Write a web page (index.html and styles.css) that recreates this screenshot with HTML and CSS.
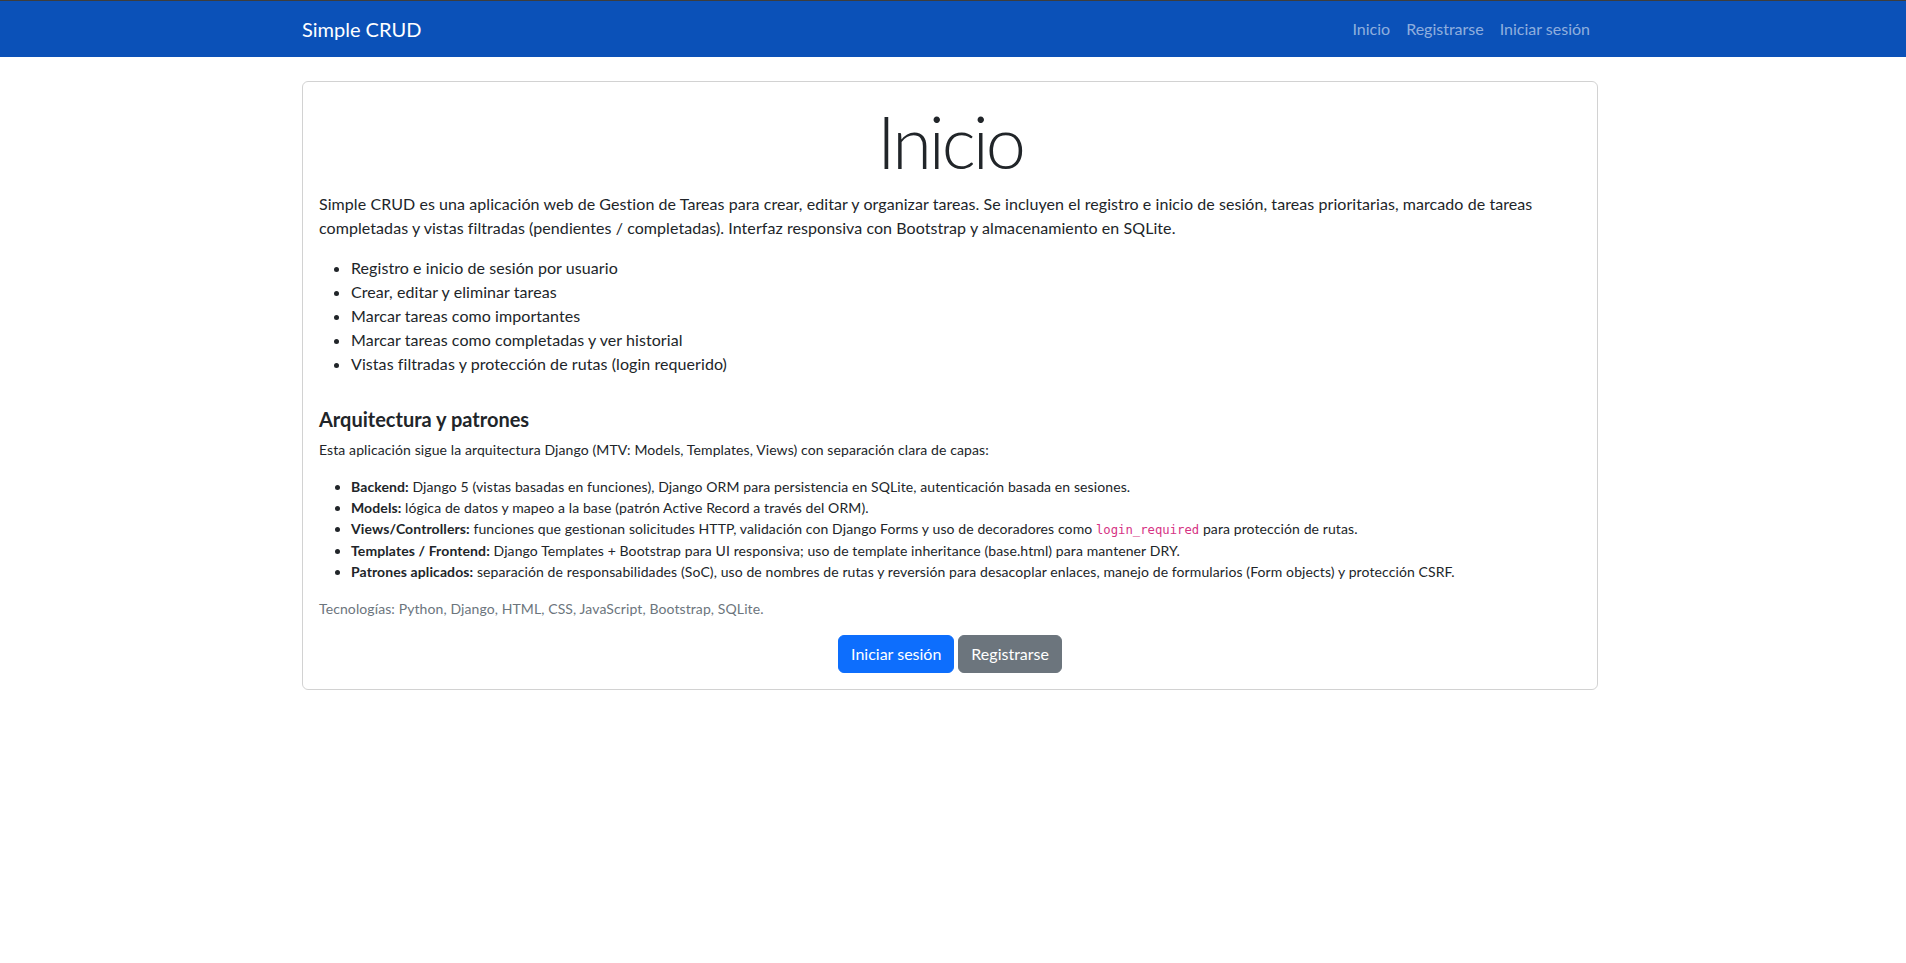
FILE: index.html
```html
<!DOCTYPE html>
<html lang="es">
<head>
<meta charset="utf-8">
<title>Simple CRUD</title>
<link rel="stylesheet" href="styles.css">
</head>
<body>
<nav class="navbar">
  <div class="container nav-inner">
    <a class="brand" href="#">Simple CRUD</a>
    <ul class="nav-links">
      <li><a href="#">Inicio</a></li>
      <li><a href="#">Registrarse</a></li>
      <li><a href="#">Iniciar sesión</a></li>
    </ul>
  </div>
</nav>
<main class="container main">
  <div class="card">
    <h1 class="display">Inicio</h1>
    <p>Simple CRUD es una aplicación web de Gestion de Tareas para crear, editar y organizar tareas. Se incluyen el registro e inicio de sesión, tareas prioritarias, marcado de tareas completadas y vistas filtradas (pendientes / completadas). Interfaz responsiva con Bootstrap y almacenamiento en SQLite.</p>
    <ul class="list">
      <li>Registro e inicio de sesión por usuario</li>
      <li>Crear, editar y eliminar tareas</li>
      <li>Marcar tareas como importantes</li>
      <li>Marcar tareas como completadas y ver historial</li>
      <li>Vistas filtradas y protección de rutas (login requerido)</li>
    </ul>
    <section class="arch">
      <h5 class="sub">Arquitectura y patrones</h5>
      <p class="small">Esta aplicación sigue la arquitectura Django (MTV: Models, Templates, Views) con separación clara de capas:</p>
      <ul class="list small">
        <li><strong>Backend:</strong> Django 5 (vistas basadas en funciones), Django ORM para persistencia en SQLite, autenticación basada en sesiones.</li>
        <li><strong>Models:</strong> lógica de datos y mapeo a la base (patrón Active Record a través del ORM).</li>
        <li><strong>Views/Controllers:</strong> funciones que gestionan solicitudes HTTP, validación con Django Forms y uso de decoradores como <code>login_required</code> para protección de rutas.</li>
        <li><strong>Templates / Frontend:</strong> Django Templates + Bootstrap para UI responsiva; uso de template inheritance (base.html) para mantener DRY.</li>
        <li><strong>Patrones aplicados:</strong> separación de responsabilidades (SoC), uso de nombres de rutas y reversión para desacoplar enlaces, manejo de formularios (Form objects) y protección CSRF.</li>
      </ul>
      <p class="small muted">Tecnologías: Python, Django, HTML, CSS, JavaScript, Bootstrap, SQLite.</p>
    </section>
    <div class="actions">
      <a class="btn btn-primary" href="#">Iniciar sesión</a>
      <a class="btn btn-secondary" href="#">Registrarse</a>
    </div>
  </div>
</main>
</body>
</html>
```
FILE: styles.css
```css
* { box-sizing: border-box; }
html, body { margin: 0; padding: 0; }
body {
  font-family: Lato, "Liberation Sans", sans-serif;
  font-size: 16px;
  line-height: 1.5;
  color: #212529;
  background: #fff;
  border-top: 1px solid #3d3d3d;
}
a { text-decoration: none; }
.container {
  max-width: 1326px;
  margin: 0 auto;
  padding: 0 18px 0 12px;
}
.navbar {
  background: #0b51b8;
  padding: 8px 0;
}
.nav-inner {
  display: flex;
  align-items: center;
  justify-content: space-between;
}
.brand {
  color: #fff;
  font-size: 20px;
  line-height: 30px;
  padding: 5px 0;
}
.nav-links {
  display: flex;
  list-style: none;
  margin: 0;
  padding: 0;
}
.nav-links a {
  display: block;
  padding: 8px;
  color: rgba(255,255,255,0.55);
}
.main { padding-top: 24px; }
.card {
  border: 1px solid rgba(0,0,0,0.175);
  border-radius: 6px;
  padding: 16px;
}
.display {
  font-size: 72px;
  font-weight: 300;
  line-height: 1.2;
  letter-spacing: -3px;
  text-align: center;
  margin: 0 0 8px;
}
p { margin: 0 0 16px; letter-spacing: 0.07px; }
.list { margin: 0 0 16px; padding-left: 32px; letter-spacing: 0.07px; }
.arch { margin-top: 31px; }
.sub {
  font-size: 20px;
  font-weight: 700;
  line-height: 1.2;
  margin: 0 0 8px;
}
.small { font-size: 14px; letter-spacing: 0.1px; }
.small strong { font-weight: 700; }
.muted { color: #6c757d; }
code {
  font-family: "DejaVu Sans Mono", "Liberation Mono", monospace;
  font-size: 0.875em;
  letter-spacing: 0;
  color: #d63384;
}
.actions {
  display: flex;
  justify-content: center;
  gap: 4px;
}
.btn {
  display: inline-block;
  padding: 6px 12px;
  font-size: 16px;
  line-height: 24px;
  border: 1px solid transparent;
  border-radius: 6px;
  color: #fff;
}
.btn-primary { background: #0d6efd; border-color: #0d6efd; }
.btn-secondary { background: #6c757d; border-color: #6c757d; }
```
